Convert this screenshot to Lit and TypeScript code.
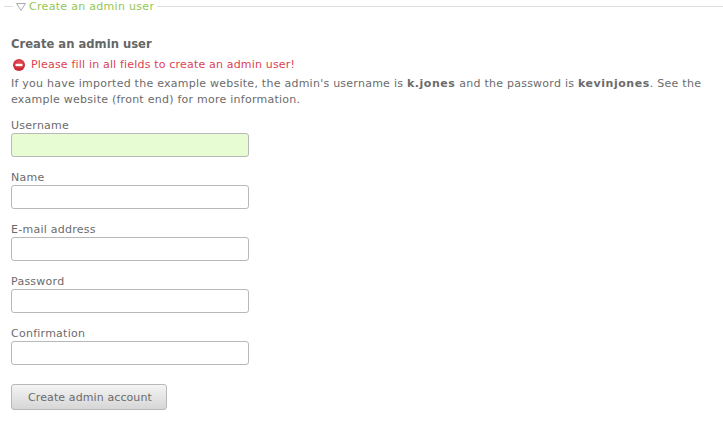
import { LitElement, html, css } from 'lit';
import { customElement } from 'lit/decorators.js';

const FIELDS = [
  { label: 'Username', missing: true },
  { label: 'Name', missing: false },
  { label: 'E-mail address', missing: false },
  { label: 'Password', missing: false },
  { label: 'Confirmation', missing: false },
];

@customElement('app-root')
export class AppRoot extends LitElement {
  static styles = css`
    :host {
      display: block;
      font-family: 'DejaVu Sans', Verdana, sans-serif;
      font-size: 11px;
      line-height: 16px;
      letter-spacing: 0.25px;
      color: #6b6b6b;
      background: #fff;
      height: 422px;
      overflow: hidden;
    }
    .legend {
      display: flex;
      align-items: center;
      height: 13px;
      gap: 3px;
      letter-spacing: 0.3px;
      color: #93c654;
    }
    .rule {
      height: 1px;
      background: #ddd;
    }
    .rule-start {
      width: 9px;
      margin-left: 4px;
    }
    .rule-end {
      flex: 1;
    }
    .legend svg {
      display: block;
    }
    .body {
      padding: 23px 11px 0;
    }
    h2 {
      margin: 0;
      font-size: 11.6px;
      line-height: 16px;
      font-weight: bold;
      letter-spacing: 0;
      color: #666;
    }
    .error {
      display: flex;
      align-items: center;
      gap: 6px;
      margin-top: 5px;
      letter-spacing: 0.18px;
      color: #dc3f52;
    }
    .error svg {
      display: block;
      margin-left: 2px;
    }
    .intro {
      margin: 3px 0 0;
      width: 700px;
    }
    .intro b {
      letter-spacing: 0.55px;
    }
    form {
      margin-top: 9px;
    }
    .field {
      display: block;
      height: 52px;
    }
    .field span {
      display: block;
      height: 16px;
      padding-top: 1px;
      margin-bottom: -1px;
    }
    input {
      display: block;
      box-sizing: border-box;
      width: 238px;
      height: 24px;
      margin: 0;
      padding: 0 4px;
      border: 1px solid #b8b8b8;
      border-radius: 3px;
      background: #fff;
    }
    input.missing {
      background: #e8fcd4;
    }
    button {
      display: block;
      box-sizing: border-box;
      width: 156px;
      height: 26px;
      margin-top: 7px;
      padding: 1px 0 0 2px;
      border: 1px solid #b8b8b8;
      border-radius: 3px;
      background: linear-gradient(#f4f4f4, #d6d6d6);
      font: inherit;
      letter-spacing: 0.1px;
      color: #6b6b6b;
    }
  `;

  render() {
    return html`
      <div class="legend">
        <div class="rule rule-start"></div>
        <svg width="10" height="9" viewBox="0 0 10 9">
          <path d="M0.5 1.5H9.5L5 8.5Z" fill="none" stroke="#aaa" stroke-width="1" stroke-linejoin="round" />
        </svg>
        <span>Create an admin user</span>
        <div class="rule rule-end"></div>
      </div>
      <div class="body">
        <h2>Create an admin user</h2>
        <div class="error">
          <svg width="12" height="12" viewBox="0 0 12 12">
            <defs>
              <radialGradient id="stop-fill" cx="50%" cy="35%" r="70%">
                <stop offset="0" stop-color="#e8505a" />
                <stop offset="1" stop-color="#c11f2b" />
              </radialGradient>
            </defs>
            <circle cx="6" cy="6" r="6" fill="url(#stop-fill)" />
            <rect x="2.5" y="4.8" width="7" height="2.4" fill="#fff" />
          </svg>
          <span>Please fill in all fields to create an admin user!</span>
        </div>
        <p class="intro">
          If you have imported the example website, the admin's username is
          <b>k.jones</b> and the password is <b>kevinjones</b>. See the example
          website (front end) for more information.
        </p>
        <form>
          ${FIELDS.map(
            (f) => html`
              <label class="field">
                <span>${f.label}</span>
                <input class=${f.missing ? 'missing' : ''} type="text" />
              </label>
            `
          )}
          <button type="button">Create admin account</button>
        </form>
      </div>
    `;
  }
}
